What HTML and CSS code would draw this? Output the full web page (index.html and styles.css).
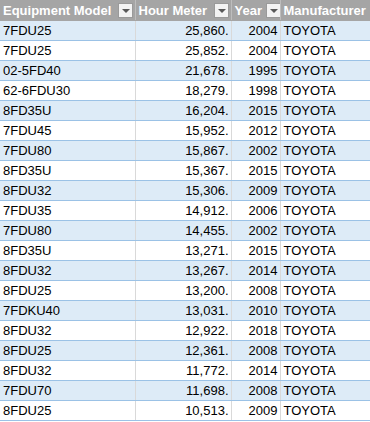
FILE: index.html
```html
<!DOCTYPE html>
<html lang="en">
<head>
    <meta charset="UTF-8">
    <title>Equipment</title>
    <link rel="stylesheet" href="styles.css">
</head>
<body>
    <table class="sheet">
        <colgroup>
            <col class="c-model">
            <col class="c-hours">
            <col class="c-year">
            <col class="c-maker">
        </colgroup>
        <thead>
            <tr>
                <th><div class="head"><span class="label">Equipment Model</span><span class="filter"></span></div></th>
                <th><div class="head"><span class="label">Hour Meter</span><span class="filter"></span></div></th>
                <th><div class="head"><span class="label">Year</span><span class="filter"></span></div></th>
                <th><div class="head"><span class="label">Manufacturer</span></div></th>
            </tr>
        </thead>
        <tbody>
            <tr><td>7FDU25</td><td class="num">25,860.</td><td class="num">2004</td><td>TOYOTA</td></tr>
            <tr><td>7FDU25</td><td class="num">25,852.</td><td class="num">2004</td><td>TOYOTA</td></tr>
            <tr><td>02-5FD40</td><td class="num">21,678.</td><td class="num">1995</td><td>TOYOTA</td></tr>
            <tr><td>62-6FDU30</td><td class="num">18,279.</td><td class="num">1998</td><td>TOYOTA</td></tr>
            <tr><td>8FD35U</td><td class="num">16,204.</td><td class="num">2015</td><td>TOYOTA</td></tr>
            <tr><td>7FDU45</td><td class="num">15,952.</td><td class="num">2012</td><td>TOYOTA</td></tr>
            <tr><td>7FDU80</td><td class="num">15,867.</td><td class="num">2002</td><td>TOYOTA</td></tr>
            <tr><td>8FD35U</td><td class="num">15,367.</td><td class="num">2015</td><td>TOYOTA</td></tr>
            <tr><td>8FDU32</td><td class="num">15,306.</td><td class="num">2009</td><td>TOYOTA</td></tr>
            <tr><td>7FDU35</td><td class="num">14,912.</td><td class="num">2006</td><td>TOYOTA</td></tr>
            <tr><td>7FDU80</td><td class="num">14,455.</td><td class="num">2002</td><td>TOYOTA</td></tr>
            <tr><td>8FD35U</td><td class="num">13,271.</td><td class="num">2015</td><td>TOYOTA</td></tr>
            <tr><td>8FDU32</td><td class="num">13,267.</td><td class="num">2014</td><td>TOYOTA</td></tr>
            <tr><td>8FDU25</td><td class="num">13,200.</td><td class="num">2008</td><td>TOYOTA</td></tr>
            <tr><td>7FDKU40</td><td class="num">13,031.</td><td class="num">2010</td><td>TOYOTA</td></tr>
            <tr><td>8FDU32</td><td class="num">12,922.</td><td class="num">2018</td><td>TOYOTA</td></tr>
            <tr><td>8FDU25</td><td class="num">12,361.</td><td class="num">2008</td><td>TOYOTA</td></tr>
            <tr><td>8FDU32</td><td class="num">11,772.</td><td class="num">2014</td><td>TOYOTA</td></tr>
            <tr><td>7FDU70</td><td class="num">11,698.</td><td class="num">2008</td><td>TOYOTA</td></tr>
            <tr><td>8FDU25</td><td class="num">10,513.</td><td class="num">2009</td><td>TOYOTA</td></tr>
        </tbody>
    </table>
</body>
</html>
```

FILE: styles.css
```css
body {
    margin: 0;
    background-color: #ffffff;
    font-family: 'Liberation Sans', Arial, sans-serif;
    overflow: hidden;
}

.sheet {
    border-collapse: collapse;
    table-layout: fixed;
    width: 370px;
    font-size: 13px;
    color: #000;
}

.c-model { width: 135px; }
.c-hours { width: 96px; }
.c-year { width: 49px; }
.c-maker { width: 90px; }

th {
    padding: 0;
    background-color: #a5a5a5;
    color: #fff;
    font-weight: bold;
    text-align: left;
    white-space: nowrap;
    overflow: hidden;
    border-left: 1px solid #bdbdbd;
    border-bottom: 1px solid #a5a5a5;
}
th:first-child {
    border-left: none;
}
.head {
    display: flex;
    align-items: center;
    justify-content: space-between;
    height: 20px;
    padding: 0 2px 0 3px;
    font-size: 13px;
    overflow: hidden;
}
.head .label {
    white-space: nowrap;
}
.head .filter {
    flex: none;
    width: 13px;
    height: 13px;
    margin-left: 4px;
    background-color: #f3f3f3;
    border: 1px solid #9a9a9a;
    position: relative;
}
/* petit triangle du filtre */
.head .filter::after {
    content: "";
    position: absolute;
    left: 3px;
    top: 5px;
    border-left: 4px solid transparent;
    border-right: 4px solid transparent;
    border-top: 4px solid #595959;
}

td {
    height: 19px;
    line-height: 19px;
    padding: 0 3px;
    white-space: nowrap;
    overflow: hidden;
    border-bottom: 1px solid #9bc2e6;
    border-left: 1px solid #d9d9d9;
}
td:first-child {
    border-left: none;
}
tbody tr:nth-child(odd) td {
    background-color: #ddebf7;
}
td.num {
    text-align: right;
    padding-right: 2px;
}
```
